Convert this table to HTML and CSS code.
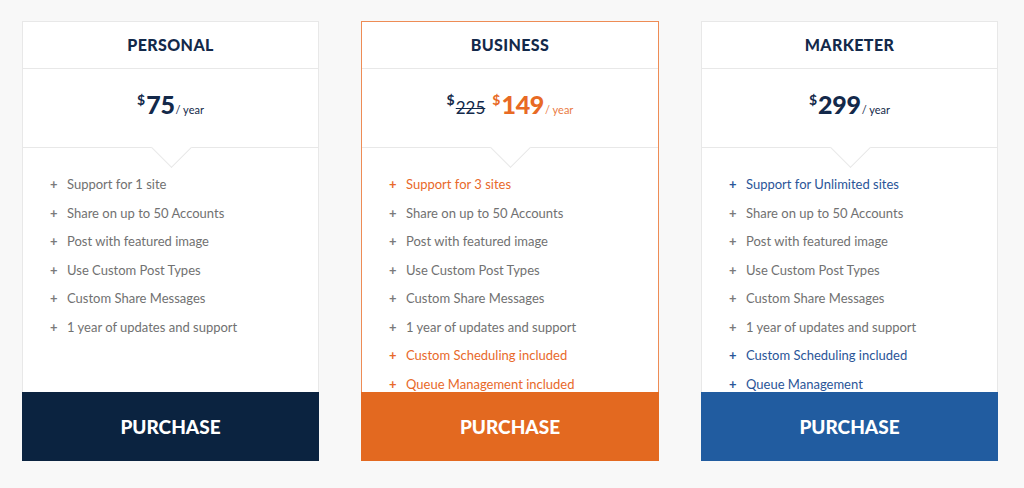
FILE: index.html
```html
<!DOCTYPE html>
<html lang="en">
<head>
<meta charset="utf-8">
<title>Pricing</title>
<link rel="stylesheet" href="styles.css">
</head>
<body>
<div class="pricing">
  <div class="card">
    <div class="card-title">PERSONAL</div>
    <div class="card-price"><span class="cur">$</span><span class="amount">75</span><span class="per">/ year</span></div>
    <ul class="features">
      <li>Support for 1 site</li>
      <li>Share on up to 50 Accounts</li>
      <li>Post with featured image</li>
      <li>Use Custom Post Types</li>
      <li>Custom Share Messages</li>
      <li>1 year of updates and support</li>
    </ul>
    <a class="buy buy-navy" href="#">PURCHASE</a>
  </div>
  <div class="card card-featured">
    <div class="card-title">BUSINESS</div>
    <div class="card-price price-orange"><span class="old"><span class="cur">$</span><s class="old-amount">225</s></span><span class="cur">$</span><span class="amount">149</span><span class="per">/ year</span></div>
    <ul class="features">
      <li class="hl-orange">Support for 3 sites</li>
      <li>Share on up to 50 Accounts</li>
      <li>Post with featured image</li>
      <li>Use Custom Post Types</li>
      <li>Custom Share Messages</li>
      <li>1 year of updates and support</li>
      <li class="hl-orange">Custom Scheduling included</li>
      <li class="hl-orange">Queue Management included</li>
    </ul>
    <a class="buy buy-orange" href="#">PURCHASE</a>
  </div>
  <div class="card">
    <div class="card-title">MARKETER</div>
    <div class="card-price"><span class="cur">$</span><span class="amount">299</span><span class="per">/ year</span></div>
    <ul class="features">
      <li class="hl-blue">Support for Unlimited sites</li>
      <li>Share on up to 50 Accounts</li>
      <li>Post with featured image</li>
      <li>Use Custom Post Types</li>
      <li>Custom Share Messages</li>
      <li>1 year of updates and support</li>
      <li class="hl-blue">Custom Scheduling included</li>
      <li class="hl-blue">Queue Management</li>
    </ul>
    <a class="buy buy-blue" href="#">PURCHASE</a>
  </div>
</div>
</body>
</html>
```
FILE: styles.css
```css
* { box-sizing: border-box; }

body {
  margin: 0;
  background: #f8f8f8;
  font-family: "Lato", "Open Sans", sans-serif;
  width: 1024px;
  height: 488px;
  overflow: hidden;
}

.pricing {
  display: flex;
  gap: 42px;
  padding: 21px 0 0 22px;
}

.card {
  width: 297px;
  height: 440px;
  background: #fff;
  border: 1px solid #e8e8e8;
  display: flex;
  flex-direction: column;
}

.card.card-featured {
  width: 298px;
  border: 1px solid #ee8c55;
}

.card-title {
  flex: none;
  height: 47px;
  border-bottom: 1px solid #e8e8e8;
  display: flex;
  align-items: center;
  justify-content: center;
  font-family: "Lato", sans-serif;
  font-weight: 900;
  font-size: 16px;
  letter-spacing: 0.4px;
  color: #13294a;
  padding-bottom: 2px;
}

.card-price {
  flex: none;
  position: relative;
  height: 79px;
  border-bottom: 1px solid #e8e8e8;
  display: flex;
  align-items: baseline;
  justify-content: center;
  padding-top: 20px;
  color: #13294a;
}

.card-price::after {
  content: "";
  position: absolute;
  left: 50%;
  bottom: -15px;
  width: 28px;
  height: 28px;
  margin-left: -14px;
  background: #fff;
  border-right: 1px solid #e8e8e8;
  border-bottom: 1px solid #e8e8e8;
  transform: rotate(45deg);
}

.cur {
  font-size: 14px;
  font-weight: 700;
  position: relative;
  top: -9px;
  margin-right: 1px;
}

.amount {
  font-size: 25px;
  font-weight: 900;
  letter-spacing: -0.3px;
}

.per {
  font-size: 11px;
  font-weight: 400;
  margin-left: 1px;
}

.price-orange { color: #e86a24; }
.price-orange .per { color: #ea7b45; }

.old {
  color: #13294a;
  margin-right: 7px;
}

.old-amount {
  font-size: 17px;
  font-weight: 400;
  text-decoration-thickness: 1px;
}

.features {
  list-style: none;
  margin: 0;
  padding: 22px 0 0 27px;
  flex: 1;
  min-height: 0;
  overflow: hidden;
}

.features li {
  height: 28.5px;
  line-height: 28.5px;
  font-size: 13px;
  color: #717171;
  display: flex;
  align-items: center;
}

.features li::before {
  content: "+";
  width: 17px;
  font-weight: 700;
  font-size: 13px;
  color: #7a7a7a;
}

.features li.hl-orange,
.features li.hl-orange::before { color: #e8692a; }

.features li.hl-blue,
.features li.hl-blue::before { color: #2a5598; }

.buy {
  flex: none;
  height: 69px;
  display: flex;
  align-items: center;
  justify-content: center;
  color: #fff;
  font-family: "Lato", sans-serif;
  font-weight: 900;
  font-size: 19px;
  text-decoration: none;
  margin: 0 -1px -1px -1px;
}

.buy-navy { background: #0b2340; }
.buy-orange { background: #e36920; }
.buy-blue { background: #215ca0; }
```
